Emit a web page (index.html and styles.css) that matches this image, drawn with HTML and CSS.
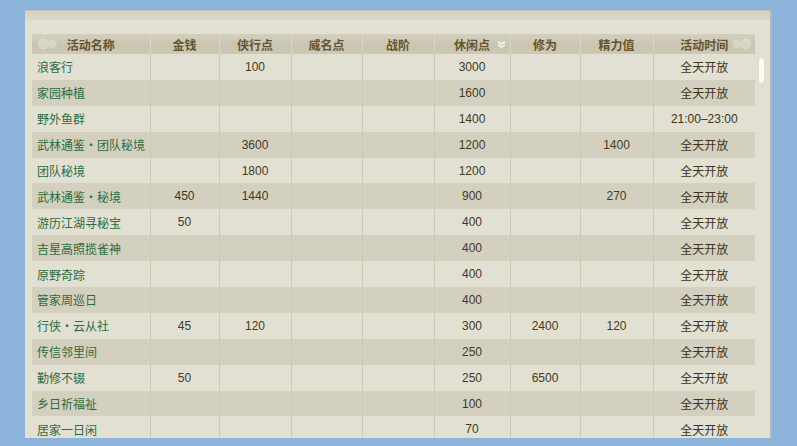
FILE: index.html
```html
<!DOCTYPE html>
<html lang="zh">
<head>
<meta charset="utf-8">
<link rel="stylesheet" href="styles.css">
</head>
<body>
<div class="panel">
  <div class="panel-top"></div>
  <div class="table-wrap">
    <table class="grid">
      <colgroup>
        <col class="c-name"><col class="c-money"><col class="c-xia"><col class="c-wei"><col class="c-zhan"><col class="c-xiu"><col class="c-xw"><col class="c-jl"><col class="c-time">
      </colgroup>
      <thead>
        <tr>
          <th class="h-first"><span class="orn orn-left"></span>活动名称</th>
          <th>金钱</th>
          <th>侠行点</th>
          <th>威名点</th>
          <th>战阶</th>
          <th class="h-sort">休闲点<svg class="sort" width="9" height="8" viewBox="0 0 9 8"><path d="M1 1.5 L4.5 4 L8 1.5 M1 4.5 L4.5 7 L8 4.5" fill="none" stroke="#f4f1e6" stroke-width="1.6"/></svg></th>
          <th>修为</th>
          <th>精力值</th>
          <th class="h-last">活动时间<span class="orn orn-right"></span></th>
        </tr>
      </thead>
      <tbody>
        <tr><td class="name">浪客行</td><td></td><td>100</td><td></td><td></td><td>3000</td><td></td><td></td><td class="time">全天开放</td></tr>
        <tr><td class="name">家园种植</td><td></td><td></td><td></td><td></td><td>1600</td><td></td><td></td><td class="time">全天开放</td></tr>
        <tr><td class="name">野外鱼群</td><td></td><td></td><td></td><td></td><td>1400</td><td></td><td></td><td class="time">21:00–23:00</td></tr>
        <tr><td class="name">武林通鉴・团队秘境</td><td></td><td>3600</td><td></td><td></td><td>1200</td><td></td><td>1400</td><td class="time">全天开放</td></tr>
        <tr><td class="name">团队秘境</td><td></td><td>1800</td><td></td><td></td><td>1200</td><td></td><td></td><td class="time">全天开放</td></tr>
        <tr><td class="name">武林通鉴・秘境</td><td>450</td><td>1440</td><td></td><td></td><td>900</td><td></td><td>270</td><td class="time">全天开放</td></tr>
        <tr><td class="name">游历江湖寻秘宝</td><td>50</td><td></td><td></td><td></td><td>400</td><td></td><td></td><td class="time">全天开放</td></tr>
        <tr><td class="name">吉星高照揽雀神</td><td></td><td></td><td></td><td></td><td>400</td><td></td><td></td><td class="time">全天开放</td></tr>
        <tr><td class="name">原野奇踪</td><td></td><td></td><td></td><td></td><td>400</td><td></td><td></td><td class="time">全天开放</td></tr>
        <tr><td class="name">管家周巡日</td><td></td><td></td><td></td><td></td><td>400</td><td></td><td></td><td class="time">全天开放</td></tr>
        <tr><td class="name">行侠・云从社</td><td>45</td><td>120</td><td></td><td></td><td>300</td><td>2400</td><td>120</td><td class="time">全天开放</td></tr>
        <tr><td class="name">传信邻里间</td><td></td><td></td><td></td><td></td><td>250</td><td></td><td></td><td class="time">全天开放</td></tr>
        <tr><td class="name">勤修不辍</td><td>50</td><td></td><td></td><td></td><td>250</td><td>6500</td><td></td><td class="time">全天开放</td></tr>
        <tr><td class="name">乡日祈福祉</td><td></td><td></td><td></td><td></td><td>100</td><td></td><td></td><td class="time">全天开放</td></tr>
        <tr><td class="name">居家一日闲</td><td></td><td></td><td></td><td></td><td>70</td><td></td><td></td><td class="time">全天开放</td></tr>
      </tbody>
    </table>
    <div class="scroll-track"><div class="scroll-thumb"></div></div>
  </div>
</div>
</body>
</html>
```
FILE: styles.css
```css
* { box-sizing: border-box; }
html, body { margin: 0; padding: 0; }
body {
  width: 797px;
  height: 446px;
  overflow: hidden;
  background: #8cb4da;
  font-family: "Liberation Sans", "Noto Sans CJK SC", sans-serif;
  font-size: 12px;
}
.panel {
  margin: 10px 0 0 25px;
  width: 747px;
  height: 428px;
  background: #e2e0d3;
  border-right: 2px solid #b9b7ad;
  overflow: hidden;
  position: relative;
}
.panel-top {
  height: 10px;
  background: linear-gradient(#d4d0c2, #dcd9cc);
  border-top: 1px solid #c9c5b6;
}
.table-wrap {
  display: flex;
  align-items: flex-start;
  padding: 14px 0 0 7px;
  gap: 2px;
}
.grid {
  border-collapse: collapse;
  table-layout: fixed;
  width: 723px;
}
.c-name { width: 118px; }
.c-money { width: 69px; }
.c-xia { width: 72px; }
.c-wei { width: 71px; }
.c-zhan { width: 72px; }
.c-xiu { width: 76px; }
.c-xw { width: 70px; }
.c-jl { width: 73px; }
.c-time { width: 102px; }

thead th {
  height: 20px;
  padding: 0;
  font-weight: bold;
  color: #66532f;
  text-align: center;
  background: linear-gradient(#d3cfbd, #c9c4b0 60%, #cdc9b6);
  border-left: 1px solid #dad6c6;
  position: relative;
  white-space: nowrap;
}
thead th.h-first { border-left: none; }
.orn {
  position: absolute;
  top: 2px;
  width: 26px;
  height: 16px;
  border-radius: 8px;
  opacity: 0.5;
}
.orn-left {
  left: 2px;
  background: radial-gradient(circle at 70% 50%, #e6e3d6 0 4px, transparent 5px), radial-gradient(circle at 35% 50%, #ebe8dc 0 5px, transparent 6px);
}
.orn-right {
  right: 0;
  background: radial-gradient(circle at 30% 50%, #e6e3d6 0 4px, transparent 5px), radial-gradient(circle at 65% 50%, #ebe8dc 0 5px, transparent 6px);
}
.sort {
  position: absolute;
  right: 4px;
  top: 6px;
}
tbody td {
  height: 25.9px;
  padding: 0;
  text-align: center;
  color: #43391f;
  border-left: 1px solid #cdc9b9;
  white-space: nowrap;
}
tbody tr:nth-child(odd) td { background: #e2e0d3; }
tbody tr:nth-child(even) td { background: #d4d0c0; }
tbody td.name {
  text-align: left;
  padding-left: 5px;
  color: #2f6b3c;
  border-left: none;
}
tbody td.time { color: #3d331c; }
.scroll-track {
  width: 8px;
  padding-top: 24px;
  display: flex;
  justify-content: center;
}
.scroll-thumb {
  width: 5px;
  height: 25px;
  border-radius: 3px;
  background: #fbfaf5;
  box-shadow: 0 0 1px #b8b4a4;
}
```
